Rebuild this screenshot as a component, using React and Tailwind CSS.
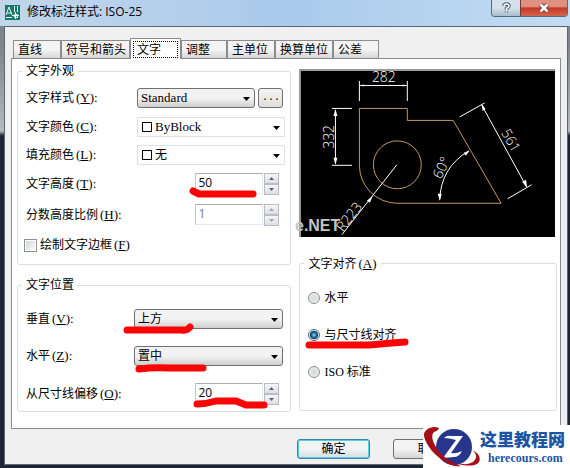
import React from 'react';

const cjk = "font-['Liberation_Serif','Noto_Sans_CJK_SC',serif]";

const tabs = [
  { name: '直线', width: 'w-12' },
  { name: '符号和箭头', width: 'w-[69px]' },
  { name: '文字', width: 'w-[51px]', active: true },
  { name: '调整', width: 'w-[46px]' },
  { name: '主单位', width: 'w-12' },
  { name: '换算单位', width: 'w-[58px]' },
  { name: '公差', width: 'w-[46px]' },
];

const Hotkey = ({ letter, colon = true }) => (
  <span className="pl-[2px] text-[13px] leading-4">
    (<u>{letter}</u>){colon && ':'}
  </span>
);

const RowLabel = ({ id, text, letter }) => (
  <label htmlFor={id} className="shrink-0 whitespace-nowrap">
    {text}
    <Hotkey letter={letter} />
  </label>
);

const Group = ({ title, className, children }) => (
  <fieldset className={`min-w-0 rounded-[3px] border border-[#d5dfe5] px-2 ${className}`}>
    <legend className="-ml-1 h-4 px-1 leading-4">{title}</legend>
    {children}
  </fieldset>
);

const DropDown = ({ id, value, swatch, flat, latin, className }) => (
  <div className={`relative h-5 ${className}`}>
    <select
      id={id}
      defaultValue={value}
      className={`h-full w-full appearance-none pr-4 leading-[18px] ${swatch ? 'pl-[17px]' : 'pl-[3px]'} ${
        latin ? 'text-[13px]' : 'text-xs'
      } ${
        flat
          ? 'border border-[#dce3e8] bg-white'
          : 'rounded-[3px] border border-[#707070] bg-linear-to-b from-[#f2f2f2] from-50% to-[#cfcfcf]'
      }`}
    >
      <option>{value}</option>
    </select>
    {swatch && (
      <span className="pointer-events-none absolute top-1/2 left-[5px] size-[10px] -translate-y-1/2 border border-black bg-white" />
    )}
    <svg viewBox="0 0 7 4" className="pointer-events-none absolute top-[9px] right-[5px] h-1 w-[7px]" aria-hidden="true">
      <path d="M0 0h7L3.5 4z" fill="#000" />
    </svg>
  </div>
);

const Spinner = ({ id, value, disabled }) => (
  <div className={`mr-[3px] flex gap-px ${disabled ? 'text-[#777]' : ''}`}>
    <input
      id={id}
      defaultValue={value}
      disabled={disabled}
      className="h-[21px] w-[68px] border border-[#e3e9ef] border-t-[#abadb3] border-l-[#c4ccd4] bg-white px-[2px] pb-[2px] font-['Open_Sans',sans-serif] text-xs leading-4"
    />
    <div className="flex flex-col">
      {['M0 3h5L2.5 0z', 'M0 0h5L2.5 3z'].map((d, i) => (
        <button
          key={d}
          type="button"
          disabled={disabled}
          aria-label={i === 0 ? '增加' : '减少'}
          className="flex h-[11px] w-[15px] items-center justify-center border border-[#b9bcc4] bg-linear-to-b from-[#f6f6f6] to-[#dddfe4]"
        >
          <svg viewBox="0 0 5 3" className="h-[3px] w-[5px]">
            <path d={d} fill={disabled ? '#a0a3aa' : '#4d6185'} />
          </svg>
        </button>
      ))}
    </div>
  </div>
);

const Marker = ({ className, width, d }) => (
  <svg
    width={width}
    height="14"
    viewBox={`0 0 ${width} 14`}
    fill="none"
    stroke="#f90505"
    strokeWidth="7"
    strokeLinecap="round"
    strokeLinejoin="round"
    className={`pointer-events-none absolute ${className}`}
    aria-hidden="true"
  >
    <path d={d} />
  </svg>
);

const Alignment = ({ text, checked, children }) => (
  <div className="relative flex h-5 items-center">
    <label className="flex items-center gap-1">
      <input
        type="radio"
        name="alignment"
        defaultChecked={checked}
        className="size-3 appearance-none rounded-full border border-[#8a8f94] bg-radial from-[#d4d7da] to-[#f4f4f4] checked:border-[#4c6a82] checked:from-[#5cc0ea] checked:from-10% checked:via-[#10395c] checked:via-50% checked:to-[#e8eef2] checked:to-65%"
      />
      <span>{text}</span>
    </label>
    {children}
  </div>
);

const Preview = () => (
  <div className="mr-[2px] border-t-2 border-l-2 border-[#999] bg-black">
    <svg viewBox="301 71 254 166" className="block w-full overflow-visible" fill="none" stroke="#fff">
      <g stroke="#c09a62">
        <path d="M359.500 166V108.500H407.500V120.500H453.500L501.500 203.500H397A38 38 0 0 1 359.500 166" />
        <circle cx="397.500" cy="165" r="24" />
      </g>
      <path d="M359.500 81v20M407.500 81v20M360 85.500h47M332 108.500h20M332 165.500h20M335.500 110v54M460 117l25-14M482 105l45 82M508 199l24-14M397 165l-55 70M440 200Q441 168 469 151" />
      <g fill="#fff" stroke="none">
        <path d="M335.500 109l-2 7h4zM335.500 165l-2-7h4zM482 104l1 7 3-2zM527.500 188l-5-6 4-2zM440 201l-2-7h4zM470 151l-6 2 2 3zM373 196l-6 5 3 2zM360 85.500l4-1v2zM407 85.500l-4-1v2z" />
        <g className="font-['Open_Sans',sans-serif] text-[14px] font-light" textAnchor="middle">
          <text x="384" y="82">282</text>
          <text transform="translate(334 137) rotate(-90)">332</text>
          <text transform="translate(507 143) rotate(60)">561</text>
          <text transform="translate(446 170) rotate(-64)">60°</text>
          <text transform="translate(353 220) rotate(-52)">R223</text>
        </g>
        <text x="295" y="231" fill="#c4c4c4" className="font-['Liberation_Sans',sans-serif] text-base font-bold">
          e.NET
        </text>
      </g>
    </svg>
  </div>
);

const SiteBadge = () => (
  <div className="absolute right-0 bottom-0 flex h-[43px] w-[147px] bg-white">
    <svg viewBox="0 0 57 43" className="h-[43px] w-[57px] shrink-0" aria-hidden="true">
      <circle cx="31" cy="22" r="18" fill="#28358c" />
      <path d="M21 13q3-3 7-2h12L28 28q5 1 11-2-3 6-8 6l-11 1 13-18q-7-2-12-2z" fill="#fff" />
      <path d="M16 3C9 0 0 5 1 11c2 10 12 21 22 26 3 3 9 5 15 4-9-3-19-9-25-19C9 15 8 10 11 7c2-1 4-1 5-4z" fill="#a50f18" />
      <path d="M17 30c7 5 14 9 22 9 9 1 15-3 14-9-1-2-2-4-4-5 7 3 9 8 7 12-4 6-20 4-30-2-4-1-7-3-9-5z" fill="#a50f18" />
    </svg>
    <div className="flex flex-col pt-px text-[#1d54a3]">
      <span className="font-['Noto_Sans_CJK_SC',sans-serif] text-[17px] leading-[25px] font-black">这里教程网</span>
      <span className="pl-2 font-['Liberation_Serif',serif] text-xs leading-[14px] font-bold">herecours.com</span>
    </div>
  </div>
);

const App = () => {
  return (
    <div className={`relative flex min-h-screen flex-col bg-[#1c2733] bg-linear-to-b from-[#7d858e] from-10% via-[#b4bac0] via-28% to-[#1c2733] to-29% pr-[2px] pb-[3px] pl-1 text-xs text-black ${cjk}`}>
      {/* Title bar */}
      <header className="-mr-[2px] -ml-1 flex h-[26px] items-start justify-between bg-linear-to-r from-[#c3d6ea] via-[#a9caec] to-[#c2dcf3] pr-[2px] pl-[5px]">
        <div className="flex h-6 items-center gap-[7px] font-['Open_Sans','Noto_Sans_CJK_SC',sans-serif]">
          <svg viewBox="0 0 15 15" className="size-[15px]" aria-hidden="true">
            <path d="M0 0h15v15H0z" fill="#16796c" />
            <path d="M1 10L4 2l3 8M2 8h4M9.500 1v6M12.500 1v6M1 12.500h6M10.500 7v7M7 10.500h7M9.500 9.500h3v3h-3z" fill="none" stroke="#e5f5f1" />
          </svg>
          <h1>修改标注样式: ISO-25</h1>
        </div>
        <div className="flex h-[17px] overflow-hidden rounded-b-[4px] border border-t-0 border-[#596a7b]">
          <button type="button" aria-label="帮助" className="flex w-7 items-center justify-center bg-linear-to-b from-[#d5e1ec] from-50% to-[#a9bccd]">
            <svg viewBox="0 0 9 12" className="h-3 w-[9px]" fill="none">
              <path d="M2 4Q2 2 4.500 2T7 4Q7 5 4.500 6.500V8M4.500 9.500v1" stroke="#4d5966" strokeWidth="3.500" />
              <path d="M2 4Q2 2 4.500 2T7 4Q7 5 4.500 6.500V8M4.500 9.500v1" stroke="#fff" strokeWidth="1.500" />
            </svg>
          </button>
          <button type="button" aria-label="关闭" className="flex w-[47px] items-center justify-center border-l border-[#6d3b38] bg-linear-to-b from-[#df9080] from-40% via-[#c43a26] via-50% to-[#d5634b]">
            <svg viewBox="0 0 12 10" className="h-[10px] w-3" fill="none">
              <path d="M2.500 1.500l7 7M9.500 1.500l-7 7" stroke="#6b3d3d" strokeWidth="4.500" />
              <path d="M2.500 1.500l7 7M9.500 1.500l-7 7" stroke="#fff" strokeWidth="2.500" />
            </svg>
          </button>
        </div>
      </header>

      <main className="flex flex-1 flex-col border border-[#5b6773] bg-[#f0f0f0] px-[6px] pt-[11px]">
        {/* Tabs */}
        <div role="tablist" className="flex items-end pl-[2px]">
          {tabs.map((tab) => (
            <button
              key={tab.name}
              type="button"
              role="tab"
              aria-selected={Boolean(tab.active)}
              className={`border border-b-0 border-[#8b8c90] text-left whitespace-nowrap ${tab.width} ${
                tab.active
                  ? 'relative -mb-px h-[21px] bg-white p-[2px]'
                  : 'h-[18px] bg-linear-to-b from-[#f4f4f4] from-50% to-[#d6d6d6] pt-px pl-1'
              }`}
            >
              {tab.active ? (
                <span className="block h-[17px] border border-dotted border-black pl-[3px] leading-4">{tab.name}</span>
              ) : (
                tab.name
              )}
            </button>
          ))}
        </div>

        {/* Text tab */}
        <div role="tabpanel" className="grid grid-cols-[275fr_258fr] gap-2 border border-[#8b8c90] bg-white pt-1 pr-[3px] pb-4 pl-[5px]">
          <div className="flex flex-col gap-3">
            <Group title="文字外观" className="h-[202px]">
              <div className="flex h-[33px] items-center pt-1">
                <div className="w-[111px]">
                  <RowLabel id="style" text="文字样式" letter="Y" />
                </div>
                <DropDown id="style" value="Standard" latin className="flex-1" />
                <button type="button" aria-label="浏览" className="-mr-px ml-[3px] h-5 w-[25px] rounded-[3px] border border-[#707070] bg-linear-to-b from-[#f4f4f4] to-[#dedede] font-['Liberation_Mono',monospace] text-[10px]">
                  ...
                </button>
              </div>
              <div className="flex h-[29px] items-center">
                <div className="w-[111px]">
                  <RowLabel id="color" text="文字颜色" letter="C" />
                </div>
                <DropDown id="color" value="ByBlock" swatch flat latin className="-mr-[3px] flex-1" />
              </div>
              <div className="flex h-7 items-center">
                <div className="w-[111px]">
                  <RowLabel id="fill" text="填充颜色" letter="L" />
                </div>
                <DropDown id="fill" value="无" swatch flat className="-mr-[3px] flex-1" />
              </div>
              <div className="relative flex h-[29px] items-center justify-between">
                <RowLabel id="height" text="文字高度" letter="T" />
                <Spinner id="height" value="50" />
                <Marker className="right-6 bottom-[-2px]" width={70} d="M5 5L11 8H65" />
              </div>
              <div className="flex h-[33px] items-center justify-between">
                <RowLabel id="fraction" text="分数高度比例" letter="H" />
                <Spinner id="fraction" value="1" disabled />
              </div>
              <label className="flex h-7 items-center gap-[3px]">
                <input type="checkbox" className="-ml-[2px] size-[13px] appearance-none border border-[#8e8f8f] bg-linear-to-br from-[#cfd3d8] to-white shadow-[inset_0_0_0_1px_#fff]" />
                <span>
                  绘制文字边框
                  <Hotkey letter="F" colon={false} />
                </span>
              </label>
            </Group>

            <Group title="文字位置" className="h-[135px]">
              <div className="relative flex h-[37px] items-center pt-[14px]">
                <div className="w-[108px]">
                  <RowLabel id="vertical" text="垂直" letter="V" />
                </div>
                <DropDown id="vertical" value="上方" className="-mr-px flex-1" />
                <Marker className="bottom-[-7px] left-[96px]" width={74} d="M5 7H60Q65 8 68 4" />
              </div>
              <div className="relative flex h-[37px] items-center pt-[14px]">
                <div className="w-[108px]">
                  <RowLabel id="horizontal" text="水平" letter="Z" />
                </div>
                <DropDown id="horizontal" value="置中" className="-mr-px flex-1" />
                <Marker className="bottom-[-9px] left-[108px]" width={76} d="M5 7Q20 5 35 6H69" />
              </div>
              <div className="relative flex h-10 items-center justify-between pt-[14px]">
                <RowLabel id="offset" text="从尺寸线偏移" letter="O" />
                <Spinner id="offset" value="20" />
                <Marker className="right-[14px] bottom-[-4px]" width={76} d="M5 7Q14 7 24 4H44L54 8H72" />
              </div>
            </Group>
          </div>

          <div className="flex flex-col gap-[19px] pt-[6px]">
            <Preview />
            <Group
              title={
                <>
                  文字对齐
                  <Hotkey letter="A" colon={false} />
                </>
              }
              className="h-[155px]"
            >
              <div className="flex flex-col gap-[17px] pt-4">
                <Alignment text="水平" />
                <Alignment text="与尺寸线对齐" checked>
                  <Marker className="bottom-[-6px] -left-1" width={106} d="M5 8H65L88 6L101 5" />
                </Alignment>
                <Alignment text="ISO 标准" />
              </div>
            </Group>
          </div>
        </div>

        <footer className="flex justify-end gap-[23px] pt-[10px] pr-[95px] pb-1">
          <button type="button" className="h-5 w-[73px] rounded-[3px] border border-[#3c7fb1] bg-linear-to-b from-[#f3f3f3] from-50% to-[#d5dce0] shadow-[inset_0_0_0_1px_#55cdec]">
            确定
          </button>
          <button type="button" className="h-5 w-[73px] rounded-[3px] border border-[#707070] bg-linear-to-b from-[#f3f3f3] from-50% to-[#d5d5d5]">
            取消
          </button>
        </footer>
      </main>
      <SiteBadge />
    </div>
  );
};

export default App;
